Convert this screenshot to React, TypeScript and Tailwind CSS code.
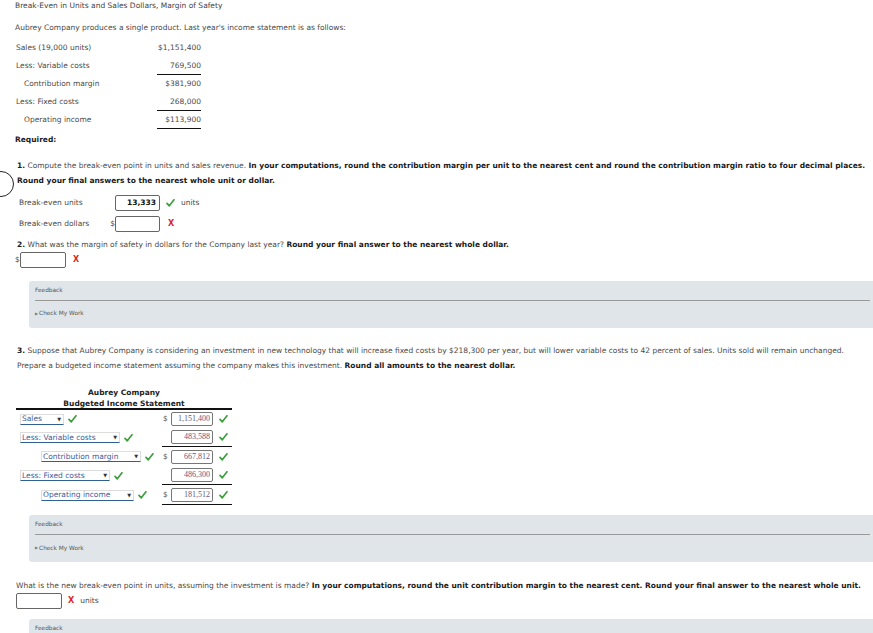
import React from "react";

const Check = () => (
  <svg width="9" height="8" viewBox="0 0 9 8" className="inline-block">
    <path d="M1 4.3 L3.3 6.8 L8 0.8" fill="none" stroke="#3f9e3f" strokeWidth="1.7" strokeLinecap="round" strokeLinejoin="round" />
  </svg>
);

const XMark = () => (
  <span className="font-bold text-[#e02424] text-[8px] leading-none">X</span>
);

const Feedback = () => (
  <div className="ml-[29px] h-[47px] bg-[#dfe5e8] rounded-l-[3px] pl-[6px] pr-[3px] flex flex-col">
    <div className="h-[20px] flex items-center text-[5.8px] text-[#555] border-b border-[#999]">Feedback</div>
    <div className="h-[26px] flex items-center text-[5.8px] text-[#555]">
      <span className="text-[4px] mr-[1px] text-[#777]">▶</span>Check My Work
    </div>
  </div>
);

const Select = ({ label, w }: { label: string; w: number }) => (
  <div
    className="h-[11px] flex items-center justify-between border border-[#ddd] border-b-[#2f5f8f] text-[#3b5b9b] leading-none pl-[1px] pr-[2px]"
    style={{ width: w }}
  >
    <span>{label}</span>
    <span className="text-[5px] text-[#333]">▼</span>
  </div>
);

const ValInput = ({ v }: { v: string }) => (
  <div className="w-[42px] h-[14px] border border-[#777] rounded-[2px] flex items-center justify-end pr-[2px] font-['Liberation_Serif',serif] text-[8px] text-[#5a5a8a]">
    {v}
  </div>
);

export default function App() {
  const rows = [
    { label: "Sales", w: 44, indent: false, dollar: true, h: 18, line: false, v: "1,151,400" },
    { label: "Less: Variable costs", w: 100, indent: false, dollar: false, h: 19, line: true, v: "483,588" },
    { label: "Contribution margin", w: 100, indent: true, dollar: true, h: 19, line: false, v: "667,812" },
    { label: "Less: Fixed costs", w: 90, indent: false, dollar: false, h: 19, line: true, v: "486,300" },
    { label: "Operating income", w: 93, indent: true, dollar: true, h: 20, line: true, v: "181,512" },
  ];
  return (
    <div className="relative w-[873px] h-[633px] overflow-hidden bg-white font-['DejaVu_Sans',sans-serif] text-[7.5px] text-[#4a4a4a]">
      {/* partial circle at left edge */}
      <div className="absolute left-[-12px] top-[171px] w-[26px] h-[26px] rounded-full border border-[#222]" />

      <div className="pl-[15px]">
        <div className="h-[12px] flex items-center text-[#444]">Break-Even in Units and Sales Dollars, Margin of Safety</div>
        <div className="mt-[10px] h-[12px] flex items-center">
          Aubrey Company produces a single product. Last year's income statement is as follows:
        </div>

        {/* income statement */}
        <div className="mt-[5px] pl-[1px] w-[186px]">
          {[
            { l: "Sales (19,000 units)", v: "$1,151,400", ind: false, b: false },
            { l: "Less: Variable costs", v: "769,500", ind: false, b: true },
            { l: "Contribution margin", v: "$381,900", ind: true, b: false },
            { l: "Less: Fixed costs", v: "268,000", ind: false, b: true },
            { l: "Operating income", v: "$113,900", ind: true, b: true },
          ].map((r) => (
            <div key={r.l} className="h-[18px] flex">
              <div className={`flex-1 flex items-center ${r.ind ? "pl-[8px]" : ""}`}>{r.l}</div>
              <div className={`w-[44px] flex items-center justify-end ${r.b ? "border-b border-[#111]" : ""}`}>{r.v}</div>
            </div>
          ))}
        </div>

        <div className="mt-[5px] h-[12px] flex items-center font-bold text-[#1a1a1a]">Required:</div>

        <div className="mt-[11.5px] pl-[2px] leading-[15px]">
          <div className="whitespace-nowrap">
            <span className="font-bold text-[#1a1a1a]">1.</span> Compute the break-even point in units and sales revenue.{" "}
            <span className="font-bold text-[#1a1a1a]">
              In your computations, round the contribution margin per unit to the nearest cent and round the contribution margin ratio to four decimal places.
            </span>
          </div>
          <div className="font-bold text-[#1a1a1a]">Round your final answers to the nearest whole unit or dollar.</div>
        </div>

        <div className="mt-[5px] pl-[4px]">
          <div className="h-[21px] flex items-center">
            <div className="w-[96px]">Break-even units</div>
            <div className="w-[45px] h-[16px] border border-[#666] rounded-[2px] flex items-center justify-end pr-[3px] font-bold text-[7.5px] text-[#111]">
              13,333
            </div>
            <div className="ml-[6px]"><Check /></div>
            <div className="ml-[6px]">units</div>
          </div>
          <div className="h-[21px] flex items-center">
            <div className="w-[96px] flex justify-between">
              <span>Break-even dollars</span>
              <span>$</span>
            </div>
            <div className="w-[45px] h-[16px] border border-[#666] rounded-[2px]" />
            <div className="ml-[8px]"><XMark /></div>
          </div>
        </div>

        <div className="mt-[4px] h-[13px] flex items-center pl-[2px] whitespace-nowrap">
          <span className="font-bold text-[#1a1a1a]">2.</span>&nbsp;What was the margin of safety in dollars for the Company last year?&nbsp;
          <span className="font-bold text-[#1a1a1a]">Round your final answer to the nearest whole dollar.</span>
        </div>
        <div className="h-[17px] flex items-center">
          <span className="w-[5px]">$</span>
          <div className="w-[46px] h-[16px] border border-[#666] rounded-[2px]" />
          <div className="ml-[7px]"><XMark /></div>
        </div>
      </div>

      <div className="mt-[12px]"><Feedback /></div>

      <div className="pl-[15px]">
        <div className="mt-[15.5px] pl-[2px] leading-[15px]">
          <div className="whitespace-nowrap">
            <span className="font-bold text-[#1a1a1a]">3.</span> Suppose that Aubrey Company is considering an investment in new technology that will increase fixed costs by $218,300 per year, but will lower variable costs to 42 percent of sales. Units sold will remain unchanged.
          </div>
          <div>
            Prepare a budgeted income statement assuming the company makes this investment.{" "}
            <span className="font-bold text-[#1a1a1a]">Round all amounts to the nearest dollar.</span>
          </div>
        </div>

        <div className="mt-[15px] ml-[1px] w-[216px]">
          <div className="h-[22px] flex flex-col items-center justify-center leading-[11px] font-bold text-[7.5px] text-[#222] border-b-2 border-[#111]">
            <div>Aubrey Company</div>
            <div>Budgeted Income Statement</div>
          </div>
          {rows.map((r) => (
            <div key={r.label} className="flex" style={{ height: r.h }}>
              <div className={`flex-1 flex items-center ${r.indent ? "pl-[25px]" : "pl-[4px]"}`}>
                <Select label={r.label} w={r.w} />
                <div className="ml-[4px]"><Check /></div>
              </div>
              <div className={`w-[70px] flex items-center ${r.line ? "border-b border-[#111]" : ""}`}>
                <span className="w-[9px] pl-[1px] text-[#555]">{r.dollar ? "$" : ""}</span>
                <ValInput v={r.v} />
                <div className="ml-[6px]"><Check /></div>
              </div>
            </div>
          ))}
        </div>
      </div>

      <div className="mt-[10px]"><Feedback /></div>

      <div className="pl-[16px]">
        <div className="mt-[17.5px] h-[13px] flex items-center whitespace-nowrap">
          What is the new break-even point in units, assuming the investment is made?&nbsp;
          <span className="font-bold text-[#1a1a1a]">
            In your computations, round the unit contribution margin to the nearest cent. Round your final answer to the nearest whole unit.
          </span>
        </div>
        <div className="h-[17px] flex items-center">
          <div className="w-[46px] h-[16px] border border-[#666] rounded-[2px]" />
          <div className="ml-[6px]"><XMark /></div>
          <div className="ml-[6px]">units</div>
        </div>
      </div>

      <div className="mt-[9px]"><Feedback /></div>
    </div>
  );
}
